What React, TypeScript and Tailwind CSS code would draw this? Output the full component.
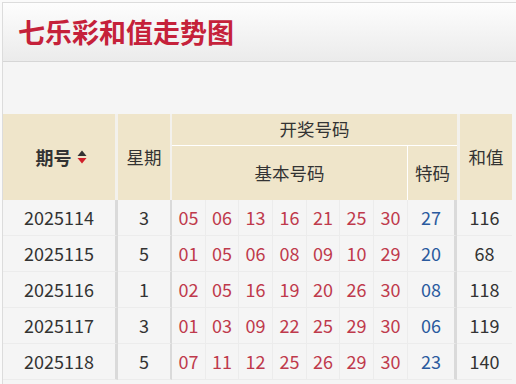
import React from 'react'

interface Draw {
  issue: string
  week: number
  basic: string[]
  special: string
  sum: number
}

const draws: Draw[] = [
  { issue: '2025114', week: 3, basic: ['05', '06', '13', '16', '21', '25', '30'], special: '27', sum: 116 },
  { issue: '2025115', week: 5, basic: ['01', '05', '06', '08', '09', '10', '29'], special: '20', sum: 68 },
  { issue: '2025116', week: 1, basic: ['02', '05', '16', '19', '20', '26', '30'], special: '08', sum: 118 },
  { issue: '2025117', week: 3, basic: ['01', '03', '09', '22', '25', '29', '30'], special: '06', sum: 119 },
  { issue: '2025118', week: 5, basic: ['07', '11', '12', '25', '26', '29', '30'], special: '23', sum: 140 },
]

const font = { fontFamily: '"Noto Sans CJK SC", "Noto Sans", sans-serif' }

const SortIcon = () => (
  <svg width="10" height="14" viewBox="0 0 10 14" className="ml-[5px]">
    <path d="M5 0.5 L9.5 6 L0.5 6 Z" fill="#333" />
    <path d="M0.5 8 L9.5 8 L5 13.5 Z" fill="#d0202a" />
  </svg>
)

const head = 'flex items-center justify-center bg-[#efe5ca] text-[17.5px] text-[#333]'
const cell = 'flex items-center justify-center h-[36px] border-b border-[#ececec] text-[18px]'

export default function App() {
  return (
    <div className="w-[516px] h-[384px] overflow-hidden bg-[#fafafa]" style={font}>
      <div className="ml-[2px] mt-[2px] h-[382px] border-l border-t border-[#dcdcdc] bg-[#f5f5f5]">
        <div className="flex h-[59px] items-center border-b border-[#d6d6d6] bg-gradient-to-b from-[#fdfdfd] to-[#ebebeb] pl-[15px]">
          <h1 className="text-[27px] font-bold text-[#c5213a]">七乐彩和值走势图</h1>
        </div>
        <div className="h-[52px]" />
        <div className="grid grid-cols-[115px_54px_34px_33px_34px_34px_33px_34px_34px_49px_55px] grid-rows-[32px_54px]">
          <div className={`${head} row-span-2 border-r-[3px] border-[#f3f1ec] pl-[4px] text-[18px] font-bold`}>
            期号
            <SortIcon />
          </div>
          <div className={`${head} row-span-2 border-r-[2px] border-[#f3f1ec]`}>星期</div>
          <div className={`${head} col-span-8 border-b border-white`}>开奖号码</div>
          <div className={`${head} row-span-2 border-l-[3px] border-[#f3f1ec]`}>和值</div>
          <div className={`${head} col-span-7 border-r border-white`}>基本号码</div>
          <div className={head}>特码</div>
          {draws.map((d) => (
            <React.Fragment key={d.issue}>
              <div className={`${cell} border-r-[3px] border-r-[#dadada] text-[#333]`}>{d.issue}</div>
              <div className={`${cell} border-r-[2px] border-r-[#dadada] text-[#333]`}>{d.week}</div>
              {d.basic.map((n, i) => (
                <div key={i} className={`${cell} border-r border-r-[#ececec] text-[#bf3a4c]`}>
                  {n}
                </div>
              ))}
              <div className={`${cell} border-r-[3px] border-r-[#dadada] text-[#2a5a9e]`}>{d.special}</div>
              <div className={`${cell} text-[#333]`}>{d.sum}</div>
            </React.Fragment>
          ))}
        </div>
      </div>
    </div>
  )
}
